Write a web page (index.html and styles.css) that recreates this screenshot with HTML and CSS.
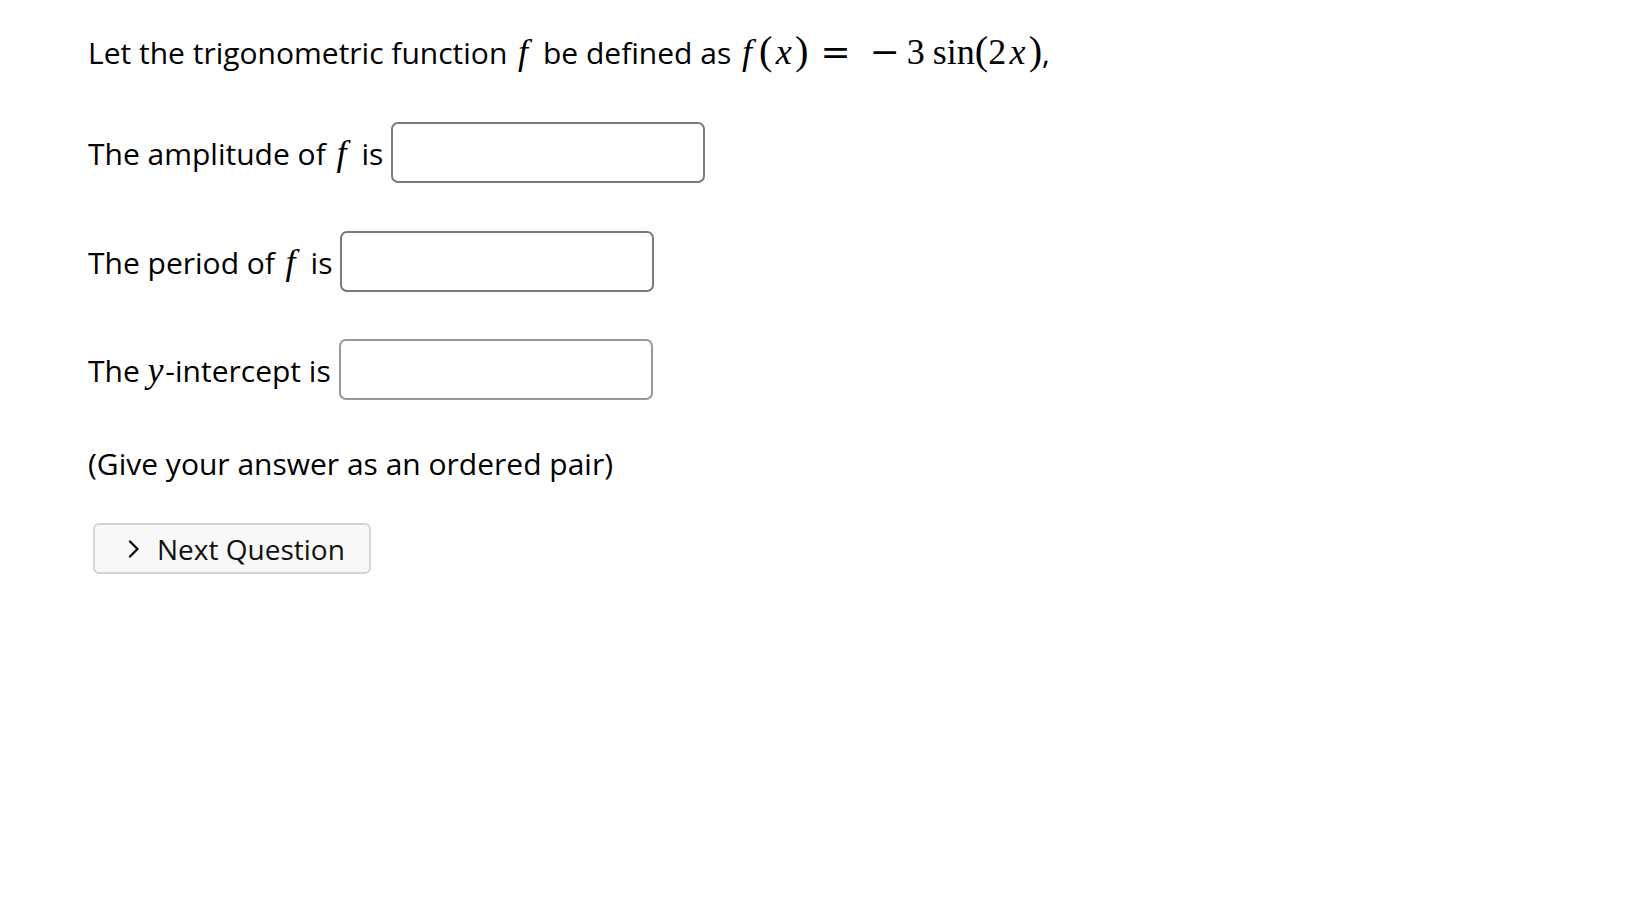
FILE: index.html
```html
<!DOCTYPE html>
<html lang="en">
<head>
<meta charset="utf-8">
<title>Trigonometric function</title>
<link rel="stylesheet" href="styles.css">
</head>
<body>
<main class="page">
  <p class="intro">Let the trigonometric function <span class="mi f">f</span> be defined as <span class="math"><span class="mi f">f</span><span class="mo">(</span><span class="mi x">x</span><span class="mo">)</span><span class="rel">=</span><span class="bin">−</span><span class="mn">3</span><span class="fn">sin</span><span class="mo">(</span><span class="mn">2</span><span class="mi x">x</span><span class="mo">)</span></span>,</p>

  <div class="row row-amp">
    <span class="label">The amplitude of <span class="mi f">f</span> is</span>
    <input class="answer" type="text" aria-label="amplitude">
  </div>

  <div class="row row-period">
    <span class="label">The period of <span class="mi f">f</span> is</span>
    <input class="answer" type="text" aria-label="period">
  </div>

  <div class="row row-yint">
    <span class="label">The <span class="mi y">y</span>-intercept is</span>
    <input class="answer answer-light" type="text" aria-label="y-intercept">
  </div>

  <p class="note">(Give your answer as an ordered pair)</p>

  <button class="next" type="button">
    <svg class="chev" width="12" height="18" viewBox="0 0 12 18" aria-hidden="true"><polyline points="2,1.5 9.5,9 2,16.5" fill="none" stroke="#111" stroke-width="2.4" stroke-linecap="round" stroke-linejoin="round"/></svg>
    <span>Next Question</span>
  </button>
</main>
</body>
</html>
```
FILE: styles.css
```css
html, body {
  margin: 0;
  padding: 0;
  background: #fff;
}

body {
  font-family: "Open Sans", "Noto Sans", sans-serif;
  font-size: 30px;
  color: #000;
}

.page {
  display: flex;
  flex-direction: column;
  align-items: flex-start;
  padding: 29px 0 0 88px;
}

.intro {
  margin: 0;
  height: 44px;
  line-height: 44px;
  white-space: nowrap;
}

.mi {
  font-family: "Liberation Serif", "DejaVu Serif", serif;
  font-style: italic;
  font-size: 36px;
}

.f {
  padding: 0 0.2em 0 0.08em;
}

.x {
  padding: 0 0.09em;
}

.y {
  padding: 0 0.05em 0 0;
}

.math {
  font-family: "Liberation Serif", "DejaVu Serif", serif;
  font-size: 36px;
}

.mo {
  font-size: 1.12em;
}

.rel {
  font-family: "DejaVu Serif", serif;
  margin: 0 19px 0 12px;
}

.bin {
  font-family: "DejaVu Serif", serif;
  font-size: 36px;
  margin: 0 7px 0 0;
}

.fn {
  margin: 0 0 0 8px;
}

.row {
  display: flex;
  align-items: center;
  gap: 8px;
}

.row-amp {
  margin-top: 49px;
}

.row-period {
  margin-top: 48px;
}

.row-yint {
  margin-top: 47px;
}

.label {
  white-space: nowrap;
}

.answer {
  box-sizing: border-box;
  width: 314px;
  height: 61px;
  margin: 0;
  border: 2px solid #7a7a7a;
  border-radius: 7px;
  background: #fff;
  font: inherit;
  padding: 0 10px;
}

.answer-light {
  border-color: #999;
}

.note {
  margin: 44px 0 0;
  height: 40px;
  line-height: 40px;
}

.next {
  margin: 39px 0 0 5px;
  box-sizing: border-box;
  width: 278px;
  height: 51px;
  display: flex;
  align-items: center;
  gap: 17px;
  padding: 0 0 0 33px;
  border: 2px solid #d4d4d4;
  border-radius: 6px;
  background: #f8f8f8;
  font-family: "Open Sans", "Noto Sans", sans-serif;
  font-size: 28px;
  color: #111;
}

.chev {
  flex: none;
}
```
